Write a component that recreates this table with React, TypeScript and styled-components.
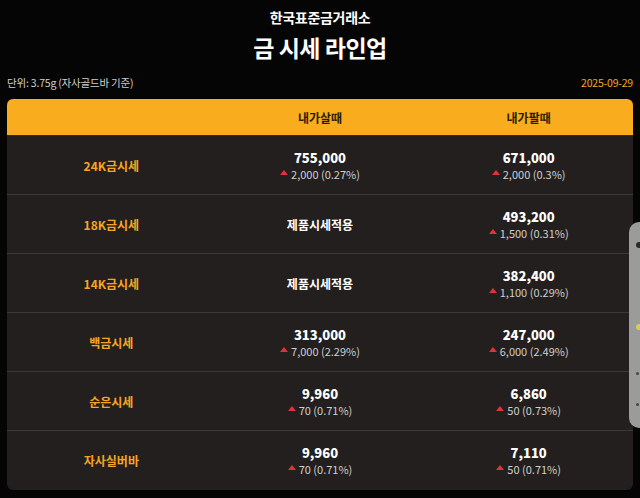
import React from 'react';
import styled, { createGlobalStyle } from 'styled-components';

const GlobalStyle = createGlobalStyle`
  html, body {
    margin: 0;
    padding: 0;
    background: #000;
  }
  body {
    font-family: 'Noto Sans CJK KR', 'Noto Sans', sans-serif;
    color: #fff;
  }
`;

const Page = styled.div`
  position: relative;
  width: 640px;
  height: 498px;
  overflow: hidden;
  background: #050505;
  padding: 0 7px;
  box-sizing: border-box;
`;

const Brand = styled.div`
  padding-top: 7px;
  text-align: center;
  font-size: 14px;
  font-weight: 700;
  line-height: 20px;
  letter-spacing: -0.3px;
`;

const Title = styled.h1`
  margin: 5px 0 0;
  text-align: center;
  font-size: 23px;
  font-weight: 700;
  line-height: 30px;
  letter-spacing: -0.5px;
`;

const MetaRow = styled.div`
  display: flex;
  justify-content: space-between;
  align-items: center;
  margin-top: 11px;
  height: 18px;
  font-size: 10.5px;
  letter-spacing: -0.2px;
`;

const Unit = styled.span`
  color: #cfcfcf;
`;

const DateText = styled.span`
  color: #f6a623;
`;

const Table = styled.div`
  margin-top: 8px;
  border-radius: 6px;
  overflow: hidden;
  background: #221f1e;
`;

const HeadRow = styled.div`
  display: grid;
  grid-template-columns: repeat(3, 1fr);
  height: 37px;
  align-items: center;
  background: #f9ac1e;
  border-bottom: 1px solid #3a2a10;
  box-sizing: border-box;
`;

const HeadCell = styled.div`
  text-align: center;
  font-size: 12px;
  font-weight: 700;
  color: #2a1c05;
`;

const Row = styled.div<{ $last?: boolean }>`
  display: grid;
  grid-template-columns: repeat(3, 1fr);
  height: 59px;
  align-items: center;
  border-bottom: ${(p) => (p.$last ? 'none' : '1px solid #3b3937')};
  box-sizing: border-box;
`;

const Label = styled.div`
  text-align: center;
  font-size: 12px;
  font-weight: 700;
  color: #f6a623;
`;

const PriceCell = styled.div`
  display: flex;
  flex-direction: column;
  align-items: center;
`;

const Price = styled.div`
  font-size: 13px;
  font-weight: 900;
  line-height: 17px;
  color: #fff;
`;

const Change = styled.div`
  display: flex;
  align-items: center;
  gap: 3px;
  font-size: 11px;
  line-height: 16px;
  color: #cfcfcf;
`;

const UpArrow = styled.span`
  display: inline-block;
  width: 0;
  height: 0;
  border-left: 4px solid transparent;
  border-right: 4px solid transparent;
  border-bottom: 5px solid #e0323a;
  margin-top: -3px;
`;

const Notice = styled.div`
  text-align: center;
  font-size: 12px;
  font-weight: 700;
  color: #fff;
`;

const SidePanel = styled.div`
  position: absolute;
  left: 629px;
  top: 222px;
  width: 30px;
  height: 206px;
  border-radius: 10px 0 0 10px;
  background: #9b9b9b;
`;

const PanelDot = styled.span<{ $top: number; $color: string; $size: number }>`
  position: absolute;
  left: 7px;
  top: ${(p) => p.$top}px;
  width: ${(p) => p.$size}px;
  height: ${(p) => p.$size}px;
  border-radius: 50%;
  background: ${(p) => p.$color};
`;

type Quote = { price: string; change: string } | null;

type Item = { label: string; buy: Quote; sell: Quote };

const items: Item[] = [
  {
    label: '24K금시세',
    buy: { price: '755,000', change: '2,000 (0.27%)' },
    sell: { price: '671,000', change: '2,000 (0.3%)' },
  },
  {
    label: '18K금시세',
    buy: null,
    sell: { price: '493,200', change: '1,500 (0.31%)' },
  },
  {
    label: '14K금시세',
    buy: null,
    sell: { price: '382,400', change: '1,100 (0.29%)' },
  },
  {
    label: '백금시세',
    buy: { price: '313,000', change: '7,000 (2.29%)' },
    sell: { price: '247,000', change: '6,000 (2.49%)' },
  },
  {
    label: '순은시세',
    buy: { price: '9,960', change: '70 (0.71%)' },
    sell: { price: '6,860', change: '50 (0.73%)' },
  },
  {
    label: '자사실버바',
    buy: { price: '9,960', change: '70 (0.71%)' },
    sell: { price: '7,110', change: '50 (0.71%)' },
  },
];

const QuoteCell: React.FC<{ quote: Quote }> = ({ quote }) => {
  if (!quote) return <Notice>제품시세적용</Notice>;
  return (
    <PriceCell>
      <Price>{quote.price}</Price>
      <Change>
        <UpArrow />
        {quote.change}
      </Change>
    </PriceCell>
  );
};

export default function App() {
  return (
    <Page>
      <GlobalStyle />
      <Brand>한국표준금거래소</Brand>
      <Title>금 시세 라인업</Title>
      <MetaRow>
        <Unit>단위: 3.75g (자사골드바 기준)</Unit>
        <DateText>2025-09-29</DateText>
      </MetaRow>
      <Table>
        <HeadRow>
          <HeadCell />
          <HeadCell>내가살때</HeadCell>
          <HeadCell>내가팔때</HeadCell>
        </HeadRow>
        {items.map((item, i) => (
          <Row key={item.label} $last={i === items.length - 1}>
            <Label>{item.label}</Label>
            <QuoteCell quote={item.buy} />
            <QuoteCell quote={item.sell} />
          </Row>
        ))}
      </Table>
      <SidePanel>
        <PanelDot $top={20} $color="#2b2b2b" $size={6} />
        <PanelDot $top={102} $color="#d8c95a" $size={6} />
        <PanelDot $top={150} $color="#444" $size={3} />
        <PanelDot $top={181} $color="#444" $size={3} />
      </SidePanel>
    </Page>
  );
}
